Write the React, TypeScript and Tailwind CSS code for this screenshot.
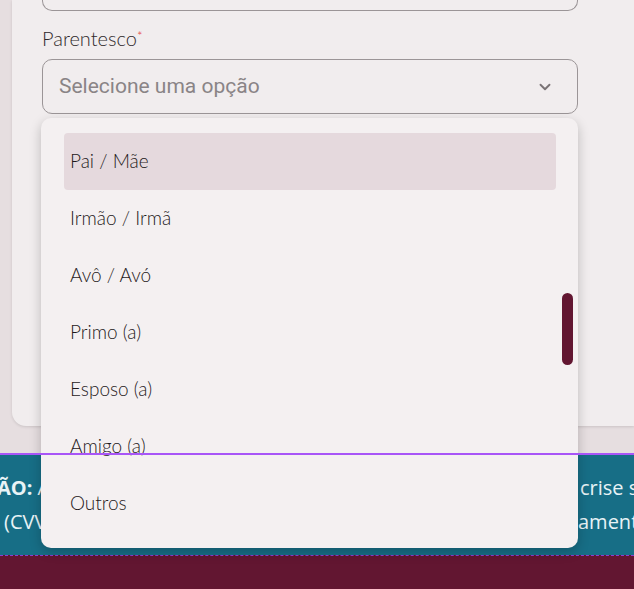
import { ChevronDown } from 'lucide-react';

const options = ['Pai / Mãe', 'Irmão / Irmã', 'Avô / Avó', 'Primo (a)', 'Esposo (a)', 'Amigo (a)', 'Outros'];

const itemFont = { fontFamily: 'Lato, "Open Sans", sans-serif' };

export default function App() {
  return (
    <div className="relative h-[589px] w-full overflow-hidden bg-[#e6dee0]" style={{ fontFamily: 'Inter, sans-serif' }}>
      {/* Form card */}
      <div className="ml-[12px] flex h-[426px] flex-col rounded-bl-[14px] bg-[#f1edee] pl-[30px] pr-[56px] shadow-[0_1px_3px_rgba(0,0,0,0.12)]">
        <div className="h-[11px] rounded-b-[10px] border-[1.5px] border-t-0 border-[#9b9597]" />
        <label className="mt-[15px] block text-[20px] font-light leading-[24px] text-[#2f292b]" style={itemFont}>
          Parentesco<span className="relative -top-[5px] text-[13px] text-[#e53935]">*</span>
        </label>
        <div className="mt-[6px] flex h-[55px] items-center justify-between rounded-[10px] border-[1.5px] border-[#9b9597] pl-[16px] pr-[23px]">
          <span className="text-[21px] text-[#8a8486]" style={{ fontFamily: 'Roboto, sans-serif' }}>
            Selecione uma opção
          </span>
          <ChevronDown className="h-[18px] w-[18px] text-[#7a7375]" strokeWidth={2.5} />
        </div>
      </div>

      {/* Warning banner */}
      <div className="mt-[27px] h-[2px] bg-[#a855f7]" />
      <div className="h-[100px] overflow-hidden bg-[#176e86] pt-[16px] text-[20px] leading-[34px] text-[#e8f3f6]" style={{ fontFamily: '"Open Sans", sans-serif' }}>
        <div className="flex whitespace-nowrap">
          <span className="w-[583px] shrink-0 -ml-[3px]">
            <b>ÃO:</b> Antes de tudo
          </span>
          <span>crise se</span>
        </div>
        <div className="flex whitespace-nowrap">
          <span className="w-[578px] shrink-0 pl-[4px]">(CVV) 188</span>
          <span>amente</span>
        </div>
      </div>
      <div className="h-[34px] border-t border-dashed border-[#8b3fd0] bg-[#621631]" />

      {/* Dropdown popover */}
      <div className="absolute left-[41px] top-[118px] w-[537px] rounded-[10px] bg-[#f4f0f1] pb-[16px] pl-[23px] pr-[22px] pt-[15px] shadow-[0_4px_12px_rgba(0,0,0,0.22)]">
        {options.map((opt, i) => (
          <div
            key={opt}
            className={`flex h-[57px] items-center rounded-[4px] pl-[6px] text-[19px] font-light text-[#1f191b] ${i === 0 ? 'h-[56px] bg-[#e5d9dd]' : ''}`}
            style={itemFont}
          >
            {opt}
          </div>
        ))}
        <div className="absolute left-[521px] top-[175px] h-[72px] w-[11px] rounded-full bg-[#621631]" />
      </div>

      {/* devtools outline over everything */}
      <div className="pointer-events-none absolute left-0 right-0 top-[453px] h-[2px] bg-[#a855f7]" />
    </div>
  );
}
